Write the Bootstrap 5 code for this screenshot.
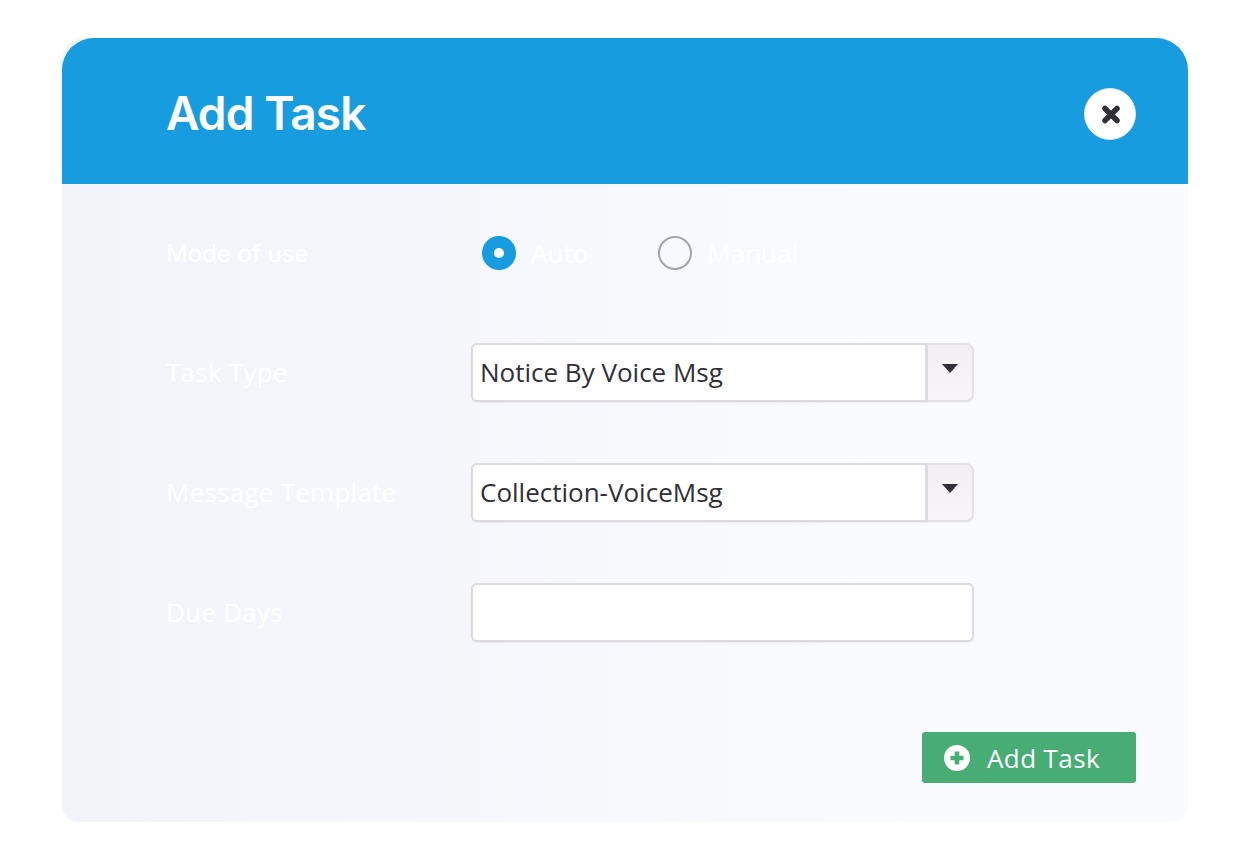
<!DOCTYPE html>
<html lang="en">
<head>
    <meta charset="UTF-8">
    <meta name="viewport" content="width=device-width, initial-scale=1.0">
    <title>Add Task</title>
    <link rel="stylesheet" href="https://cdn.jsdelivr.net/npm/bootstrap@5.3.0/dist/css/bootstrap.min.css">
    <style>
        body {
            background: #fff;
            font-family: "Open Sans", sans-serif;
            padding: 38px 62px;
        }
        .task-card {
            height: 784px;
            background: linear-gradient(90deg, #f3f4f9, #fafbff 75%);
            border-radius: 22px 22px 16px 16px;
        }
        .task-head {
            height: 146px;
            background: #179ddf;
            border-radius: 32px 32px 0 0;
            padding: 6px 52px 0 104px;
        }
        .task-title {
            font-family: Inter, sans-serif;
            font-size: 46px;
            font-weight: 600;
            letter-spacing: -0.9px;
            color: #fff;
        }
        .close-dot {
            width: 52px;
            height: 52px;
            background: #fff;
            border: 1px solid #e4e6ee;
        }
        .task-body {
            padding: 38px 52px 39px 104px;
        }
        .task-row {
            height: 120px;
        }
        .task-row:first-child {
            height: 62px;
            margin-bottom: 28px;
        }
        .task-label {
            width: 305px;
            font-size: 26px;
            letter-spacing: 0.25px;
            color: #fff;
        }
        .task-label-strong {
            font-family: Inter, sans-serif;
            font-size: 24px;
            font-weight: 400;
            letter-spacing: 0;
            padding-top: 1px;
        }
        .task-radio {
            width: 34px;
            height: 34px;
            border-radius: 50%;
            background: transparent;
            border: 2px solid #a2a5ab;
        }
        .task-radio-on {
            background: #179ddf;
            border: 12px solid #179ddf;
            margin-left: 11px;
            position: relative;
        }
        .task-radio-on::after {
            content: "";
            position: absolute;
            inset: 0;
            border-radius: 50%;
            background: #fff;
        }
        .radio-text {
            font-size: 26px;
            color: #fff;
            margin-left: 15px;
        }
        .radio-gap {
            margin-left: 70px;
        }
        .task-field {
            width: 503px;
            height: 59px;
        }
        .task-field .form-control {
            font-size: 26px;
            color: #322f37;
            padding: 0 7px;
            background: #fff;
            border: 2px solid #dcdae0;
            border-radius: 6px;
            box-shadow: 0 1px 2px rgba(60, 50, 70, 0.08);
        }
        .task-arrow {
            width: 48px;
            background: linear-gradient(180deg, #f2eff2, #f8f6f9);
            border: 2px solid #e3e1e6;
            border-radius: 0 8px 8px 0;
            padding: 0 0 7px;
            justify-content: center;
            box-shadow: 0 1px 2px rgba(60, 50, 70, 0.08);
        }
        .add-btn {
            width: 214px;
            height: 51px;
            background: #47ad75;
            border: 0;
            border-radius: 3px;
            font-size: 26px;
            letter-spacing: 0.4px;
            color: #fff;
            padding: 0 0 0 22px;
        }
        .add-btn:hover {
            background: #47ad75;
            color: #fff;
        }
        .add-btn span {
            margin-left: 17px;
            padding-top: 1px;
        }
    </style>
</head>
<body>
    <div class="task-card d-flex flex-column">
        <div class="task-head d-flex align-items-center justify-content-between">
            <h1 class="task-title m-0">Add Task</h1>
            <button type="button" class="close-dot rounded-circle d-flex align-items-center justify-content-center p-0" aria-label="Close">
                <svg width="22" height="22" viewBox="0 0 22 22"><path d="M6 5.500l12 12M18 5.500L6 17.500" stroke="#322f37" stroke-width="5.500" stroke-linecap="round"/></svg>
            </button>
        </div>
        <div class="task-body d-flex flex-column flex-grow-1">
            <div class="task-row d-flex align-items-center">
                <div class="task-label task-label-strong">Mode of use</div>
                <div class="d-flex align-items-center">
                    <span class="task-radio task-radio-on"></span>
                    <span class="radio-text">Auto</span>
                    <span class="task-radio radio-gap"></span>
                    <span class="radio-text">Manual</span>
                </div>
            </div>
            <div class="task-row d-flex align-items-center">
                <label class="task-label">Task Type</label>
                <div class="input-group task-field">
                    <input type="text" class="form-control" value="Notice By Voice Msg">
                    <span class="input-group-text task-arrow">
                        <svg width="16" height="9" viewBox="0 0 16 9"><path d="M0 0h16l-8 9z" fill="#322f37"/></svg>
                    </span>
                </div>
            </div>
            <div class="task-row d-flex align-items-center">
                <label class="task-label">Message Template</label>
                <div class="input-group task-field">
                    <input type="text" class="form-control" value="Collection-VoiceMsg">
                    <span class="input-group-text task-arrow">
                        <svg width="16" height="9" viewBox="0 0 16 9"><path d="M0 0h16l-8 9z" fill="#322f37"/></svg>
                    </span>
                </div>
            </div>
            <div class="task-row d-flex align-items-center">
                <label class="task-label">Due Days</label>
                <div class="task-field d-flex">
                    <input type="text" class="form-control">
                </div>
            </div>
            <div class="d-flex justify-content-end mt-auto">
                <button type="button" class="btn add-btn d-flex align-items-center">
                    <svg width="26" height="26" viewBox="0 0 26 26"><circle cx="13" cy="13" r="13" fill="#fff"/><path d="M13 6.500v13M6.500 13h13" stroke="#47ad75" stroke-width="4.600"/></svg>
                    <span>Add Task</span>
                </button>
            </div>
        </div>
    </div>
    <script src="https://cdn.jsdelivr.net/npm/bootstrap@5.3.0/dist/js/bootstrap.bundle.min.js"></script>
</body>
</html>
